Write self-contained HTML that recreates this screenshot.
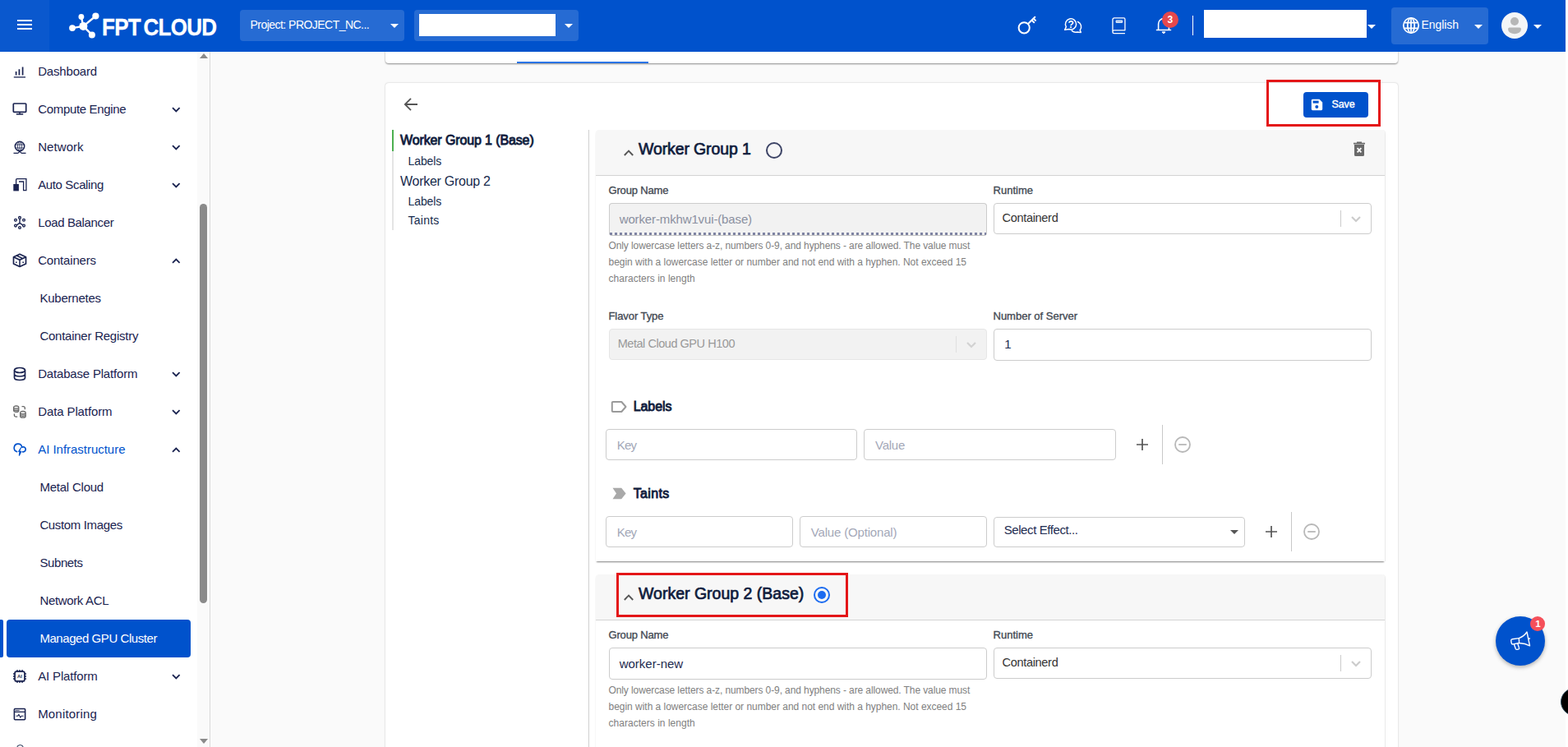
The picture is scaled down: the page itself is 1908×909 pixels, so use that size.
<!DOCTYPE html>
<html lang="en"><head><meta charset="utf-8"><title>FPT Cloud - Managed GPU Cluster</title>
<style>
*{box-sizing:border-box;margin:0;padding:0}
html,body{width:1908px;height:909px;overflow:hidden;background:#fff}
body{position:relative;font-family:'Liberation Sans', 'DejaVu Sans', sans-serif;}
.abs{position:absolute}
.t{position:absolute;white-space:nowrap;line-height:24px;font-family:'Liberation Sans', 'DejaVu Sans', sans-serif}
.r{font-family:'Liberation Sans', sans-serif}
#page{position:absolute;left:0;top:0;width:1905px;height:909px;background:#fafafa;overflow:hidden}
#hdr{position:absolute;left:0;top:0;width:1905px;height:63px;background:#0052cc}
#side{position:absolute;left:0;top:63px;width:256px;height:846px;background:#fff;border-right:1px solid #d9d9d9}
.hbox{position:absolute;background:rgba(255,255,255,.15);border-radius:4px}
.caret{position:absolute;width:0;height:0;border-left:5px solid transparent;border-right:5px solid transparent;border-top:5px solid #fff}
.card{position:absolute;background:#fff;border-radius:4px;box-shadow:0 1px 2px rgba(0,0,0,.45)}
.inp{position:absolute;border:1px solid #ccc;border-radius:4px;background:#fff}
.dis{background:#f2f2f2}
.phead{position:absolute;left:725px;width:960px;height:56px;background:#f7f7f7;border-bottom:1px solid #d4d4d4;border-radius:4px 4px 0 0}
.redbox{position:absolute;border:3.700px solid #e41618}
svg{position:absolute;overflow:visible}
</style></head>
<body>
<div id="page">
<div class="card" style="left:469px;top:40px;width:1232px;height:37px"></div>
<div class="abs" style="left:629px;top:75px;width:160px;height:2px;background:#2a74e6"></div>
<div class="card" style="left:469px;top:100.500px;width:1232px;height:900px;box-shadow:0 0 2px rgba(0,0,0,.25)"></div>
<svg style="left:491px;top:118px" width="18" height="18" viewBox="0 0 18 18" fill="none" stroke="#555" stroke-width="1.800"><path d="M17 9H2M9 1.800L1.800 9 9 16.200"/></svg>
<div class="redbox" style="left:1541.300px;top:96.600px;width:138.700px;height:57.400px"></div>
<div class="abs" style="left:1586px;top:112px;width:79px;height:31px;background:#0052cc;border-radius:4px"></div>
<svg style="left:1595px;top:120px" width="15" height="15" viewBox="0 0 15 15"><path d="M2.200.8h8.300l3.700 3.700v8.300a1.400 1.400 0 0 1-1.400 1.400H2.200a1.400 1.400 0 0 1-1.400-1.400V2.200A1.400 1.400 0 0 1 2.200.8z" fill="#fff"/><rect x="2.600" y="2.600" width="7" height="3" fill="#0052cc"/><circle cx="7.300" cy="10" r="2" fill="#0052cc"/></svg>
<div class="abs" style="left:477px;top:158px;width:2px;height:26px;background:#4caf50"></div>
<div class="abs" style="left:477px;top:184px;width:2px;height:96px;background:#e4e4e4"></div>
<div class="abs" style="left:716px;top:158px;width:1px;height:760px;background:#d0d0d0"></div>
<div class="abs" style="left:725px;top:158px;width:960px;height:525px;background:#fff;border-radius:4px 4px 0 0;box-shadow:0 2px 2px -1px rgba(0,0,0,.5), 1px 0 0 #f0f0f0"></div>
<div class="phead" style="top:158px"></div>
<svg style="left:759px;top:181.6px" width="12" height="8" viewBox="0 0 12 8" fill="none" stroke="#555" stroke-width="1.900"><path d="M.8 7l5.200-5.300L11.200 7"/></svg>
<div class="abs" style="left:932px;top:173px;width:20px;height:20px;border-radius:10px;border:2px solid #3d4466"></div>
<svg style="left:1646px;top:171px" width="16" height="20" viewBox="0 0 16 20"><path d="M2 5h12v12.500a1.500 1.500 0 0 1-1.500 1.500h-9A1.500 1.500 0 0 1 2 17.500z" fill="#6a6a6a"/><path d="M1 3.600h14M5 2.200h6" stroke="#6a6a6a" stroke-width="1.600" fill="none"/><path d="M5.600 9.200l4.800 5.200M10.400 9.200l-4.800 5.200" stroke="#fff" stroke-width="1.700"/></svg>
<div class="inp dis" style="left:741px;top:247px;width:460px;height:39px;border-bottom:none;box-shadow:0 1px 0 #c4c4c4"><div class="abs" style="left:0;right:0;bottom:0;height:3px;background:repeating-linear-gradient(90deg,#7f84a3 0,#7f84a3 3px,transparent 3px,transparent 6px)"></div></div>
<div class="inp" style="left:1209px;top:247px;width:460px;height:38px"></div>
<div class="abs" style="left:1631px;top:256px;width:1px;height:20px;background:#ccc"></div>
<svg style="left:1643.6px;top:263.0px" width="12" height="8" viewBox="0 0 12 8" fill="none" stroke="#ccc" stroke-width="2.200"><path d="M1 1l5 5 5-5"/></svg>
<div class="inp dis" style="left:741px;top:400px;width:460px;height:38px;border-color:#e6e6e6"></div>
<div class="abs" style="left:1163px;top:409px;width:1px;height:20px;background:#e0e0e0"></div>
<svg style="left:1175.5px;top:416.0px" width="12" height="8" viewBox="0 0 12 8" fill="none" stroke="#d2d2d2" stroke-width="2.200"><path d="M1 1l5 5 5-5"/></svg>
<div class="inp" style="left:1209px;top:400px;width:460px;height:39px"></div>
<svg style="left:744px;top:488px" width="19" height="14" viewBox="0 0 19 14" fill="none" stroke="#9a9a9a" stroke-width="2" stroke-linejoin="round"><path d="M1.800 1h10.500l5.200 6-5.200 6H1.800a1 1 0 0 1-1-1V2a1 1 0 0 1 1-1z"/></svg>
<div class="inp" style="left:737px;top:522px;width:306px;height:38px"></div>
<div class="inp" style="left:1051px;top:522px;width:307px;height:38px"></div>
<svg style="left:1383px;top:534px" width="14" height="14" viewBox="0 0 14 14" stroke="#555" stroke-width="1.700"><path d="M7 0v14M0 7h14"/></svg>
<div class="abs" style="left:1414px;top:517px;width:1px;height:48px;background:#c8c8c8"></div>
<svg style="left:1429px;top:531px" width="20" height="20" viewBox="0 0 20 20" fill="none" stroke="#b8b8b8" stroke-width="1.800"><circle cx="10" cy="10" r="9"/><path d="M5.200 10h9.600"/></svg>
<svg style="left:744px;top:593px" width="19" height="15" viewBox="0 0 19 15"><path d="M1.500.8h10.700l5.400 6.700-5.400 6.700H1.500L6 7.500z" fill="#a9a9a9"/></svg>
<div class="inp" style="left:737px;top:628px;width:228px;height:38px"></div>
<div class="inp" style="left:973px;top:628px;width:228px;height:38px"></div>
<div class="inp" style="left:1209px;top:629px;width:306px;height:37px"></div>
<div class="abs" style="left:1497px;top:645px;width:0;height:0;border-left:5px solid transparent;border-right:5px solid transparent;border-top:5px solid #555"></div>
<svg style="left:1540px;top:640px" width="14" height="14" viewBox="0 0 14 14" stroke="#555" stroke-width="1.700"><path d="M7 0v14M0 7h14"/></svg>
<div class="abs" style="left:1571px;top:623px;width:1px;height:48px;background:#c8c8c8"></div>
<svg style="left:1586px;top:637px" width="20" height="20" viewBox="0 0 20 20" fill="none" stroke="#b8b8b8" stroke-width="1.800"><circle cx="10" cy="10" r="9"/><path d="M5.200 10h9.600"/></svg>
<div class="abs" style="left:725px;top:699px;width:960px;height:525px;background:#fff;border-radius:4px 4px 0 0;box-shadow:0 2px 2px -1px rgba(0,0,0,.5), 1px 0 0 #f0f0f0"></div>
<div class="phead" style="top:699px"></div>
<svg style="left:759px;top:722.6px" width="12" height="8" viewBox="0 0 12 8" fill="none" stroke="#555" stroke-width="1.900"><path d="M.8 7l5.200-5.300L11.200 7"/></svg>
<div class="abs" style="left:990px;top:714px;width:20px;height:20px;border-radius:10px;border:2px solid #1d6cf0"></div>
<div class="abs" style="left:995px;top:719px;width:10px;height:10px;border-radius:5px;background:#1d6cf0"></div>
<div class="redbox" style="left:750.400px;top:697px;width:281.400px;height:53.800px"></div>
<div class="inp" style="left:741px;top:788px;width:460px;height:39px"></div>
<div class="inp" style="left:1209px;top:788px;width:460px;height:38px"></div>
<div class="abs" style="left:1631px;top:797px;width:1px;height:20px;background:#ccc"></div>
<svg style="left:1643.6px;top:804.0px" width="12" height="8" viewBox="0 0 12 8" fill="none" stroke="#ccc" stroke-width="2.200"><path d="M1 1l5 5 5-5"/></svg>
<div class="abs" style="left:1820px;top:750px;width:60px;height:60px;border-radius:30px;background:#0052cc;box-shadow:0 2px 5px rgba(0,0,0,.3)"></div>
<svg style="left:1837px;top:767px" width="26" height="26" viewBox="0 0 26 26" fill="none" stroke="#fff" stroke-width="1.400" stroke-linejoin="round" stroke-linecap="round"><path d="M11.300 9.600L3.200 10.700Q1.500 11 1.700 12.600L2.200 15.600Q2.500 17.100 4.100 16.900L11.600 15.500"/><path d="M11.300 9.600Q17.500 7.500 21 2L24.500 18.800Q19 15.800 11.600 15.500Z"/><path d="M5.400 17L7.300 22.400Q7.800 23.600 9.200 23.300L11 22.800Q11.900 22.400 11.500 21.400L9.800 16.200"/><path d="M23.200 10.200l1.200-.2"/></svg>
<div class="abs" style="left:1862px;top:750px;width:18px;height:18px;border-radius:9px;background:#f5505a"></div>
<div id="side">
<div class="abs" style="left:240px;top:0;width:15px;height:846px;background:#fafafa"></div>
<div class="abs" style="left:243px;top:185px;width:9px;height:486px;border-radius:5px;background:#8a8a8a"></div>
<div class="abs" style="left:242.500px;top:1.500px;width:0;height:0;border-left:5px solid transparent;border-right:5px solid transparent;border-bottom:6.500px solid #8a8a8a"></div>
<div class="abs" style="left:242.500px;top:836px;width:0;height:0;border-left:5px solid transparent;border-right:5px solid transparent;border-top:6.500px solid #8a8a8a"></div>
<div class="abs" style="left:19.500px;top:842.500px;width:9px;height:9px;border-radius:5px;border:1.500px solid #172b4d"></div>
<div class="abs" style="left:0;top:691px;width:4px;height:46px;background:#0052cc;border-radius:0 2px 2px 0"></div>
<div class="abs" style="left:8px;top:691px;width:224px;height:46px;background:#0052cc;border-radius:4px"></div>
</div>
<svg style="left:15px;top:78px" width="18" height="18" viewBox="0 0 18 18" fill="none" stroke="#1a2350" stroke-width="1.500"><path d="M1.800 15.900h14.200" stroke-width="1.300"/><path d="M4.600 13.500v-4.500M8.400 13.500v-7.300M12.600 13.500v-10" stroke-width="1.700"/></svg>
<svg style="left:208.5px;top:129.5px" width="10.600" height="7" viewBox="0 0 10.600 7" fill="none" stroke="#1a2350" stroke-width="1.800"><path d="M1 1.200l4.300 4.300 4.300-4.300"/></svg>
<svg style="left:15px;top:124px" width="18" height="18" viewBox="0 0 18 18" fill="none" stroke="#1a2350" stroke-width="1.500"><rect x="1.300" y="2" width="15.400" height="10.400" rx=".800" stroke-width="1.700"/><path d="M9 12.400v2.600M4.800 15h8.400" stroke-width="1.500"/></svg>
<svg style="left:208.5px;top:175.5px" width="10.600" height="7" viewBox="0 0 10.600 7" fill="none" stroke="#1a2350" stroke-width="1.800"><path d="M1 1.200l4.300 4.300 4.300-4.300"/></svg>
<svg style="left:15px;top:170px" width="18" height="18" viewBox="0 0 18 18" fill="none" stroke="#1a2350" stroke-width="1.500"><circle cx="9" cy="8" r="5.700" stroke-width="1.500"/><ellipse cx="9" cy="8" rx="2.600" ry="5.700" stroke-width=".800"/><path d="M3.300 6h11.400M3.300 10h11.400M9 2.300v11.400" stroke-width=".800"/><path d="M1.500 16.300h5c1.500 0 1.500-2 2.500-2s1 2 2.500 2h5" stroke-width="1.300"/></svg>
<svg style="left:208.5px;top:221.5px" width="10.600" height="7" viewBox="0 0 10.600 7" fill="none" stroke="#1a2350" stroke-width="1.800"><path d="M1 1.200l4.300 4.300 4.300-4.300"/></svg>
<svg style="left:15px;top:216px" width="18" height="18" viewBox="0 0 18 18" fill="none" stroke="#1a2350" stroke-width="1.500"><path d="M4.600 8.200V2.700a1 1 0 0 1 1-1H16.900V15.700H13.600V5H8" stroke-width="1.300"/><rect x="1.300" y="8" width="6.600" height="8.400" fill="#1a2350" stroke="none"/></svg>
<svg style="left:15px;top:262px" width="18" height="18" viewBox="0 0 18 18" fill="none" stroke="#1a2350" stroke-width="1.500"><g stroke-width="1.300"><path d="M9 4.300v5M9 9.300l-3.700 2.500M9 9.300l3.700 2.500" stroke-width="1.400"/><circle cx="9" cy="2.900" r="1.400"/><circle cx="4" cy="5.800" r="1.400"/><circle cx="14" cy="5.800" r="1.400"/><circle cx="4" cy="12.600" r="1.400"/><circle cx="14" cy="12.600" r="1.400"/><circle cx="9" cy="15" r="1.400"/></g></svg>
<svg style="left:208.5px;top:313.5px" width="10.600" height="7" viewBox="0 0 10.600 7" fill="none" stroke="#1a2350" stroke-width="1.800"><path d="M1 5.800l4.300-4.300 4.300 4.300"/></svg>
<svg style="left:15px;top:308px" width="18" height="18" viewBox="0 0 18 18" fill="none" stroke="#1a2350" stroke-width="1.500"><path d="M9 1.300l7.500 3.400v8.200L9 16.500l-7.500-3.600V4.700z" stroke-linejoin="round" stroke-width="1.700"/><path d="M1.500 4.700L9 8.300l7.500-3.600M9 8.300v8.200M5.200 3l7.600 3.600" stroke-width="1.500"/><path d="M4 11.200h1.600M12.400 11.200h1.600" stroke-width="1.400"/></svg>
<svg style="left:208.5px;top:451.5px" width="10.600" height="7" viewBox="0 0 10.600 7" fill="none" stroke="#1a2350" stroke-width="1.800"><path d="M1 1.200l4.300 4.300 4.300-4.300"/></svg>
<svg style="left:15px;top:446px" width="18" height="18" viewBox="0 0 18 18" fill="none" stroke="#1a2350" stroke-width="1.500"><ellipse cx="9" cy="4.500" rx="6.500" ry="3" stroke-width="1.700"/><path d="M2.500 4.500v9c0 1.700 2.900 3 6.500 3s6.500-1.300 6.500-3v-9M2.500 9c0 1.700 2.900 3 6.500 3s6.500-1.300 6.500-3" stroke-width="1.700"/></svg>
<svg style="left:208.5px;top:497.5px" width="10.600" height="7" viewBox="0 0 10.600 7" fill="none" stroke="#1a2350" stroke-width="1.800"><path d="M1 1.200l4.300 4.300 4.300-4.300"/></svg>
<svg style="left:15px;top:492px" width="18" height="18" viewBox="0 0 18 18" fill="none" stroke="#1a2350" stroke-width="1.500"><g stroke="#666" stroke-width="1.200"><rect x="1.600" y="1.800" width="6.200" height="7.600" rx="2.800" ry="2" fill="#ddd"/><path d="M1.600 4.600c1.500 1.200 4.700 1.200 6.200 0M1.600 6.800c1.500 1.200 4.700 1.200 6.200 0"/><rect x="9.600" y="8.400" width="6.600" height="7.800" rx="2.800" ry="2" fill="#ddd"/><path d="M9.600 11.200c1.500 1.200 5.100 1.200 6.600 0M9.600 13.400c1.500 1.200 5.100 1.200 6.600 0"/><path d="M11.500 2.600h1.800a2 2 0 0 1 2 2v1.700M6.200 15.200H4.400a2 2 0 0 1-2-2v-1.700" stroke-width="1.300"/></g></svg>
<svg style="left:208.5px;top:543.5px" width="10.600" height="7" viewBox="0 0 10.600 7" fill="none" stroke="#1a2350" stroke-width="1.800"><path d="M1 5.800l4.300-4.300 4.300 4.300"/></svg>
<svg style="left:15px;top:538px" width="18" height="18" viewBox="0 0 18 18" fill="none" stroke="#1a2350" stroke-width="1.500"><g stroke="#0052cc" stroke-width="1.700" stroke-linecap="round" stroke-linejoin="round"><path d="M5.600 11.600A4.800 4.800 0 1 1 11.730 6.180A3 3 0 1 1 13.200 11.800H12.600"/><path d="M10.600 6.800L7.800 11.400H10.800L8.400 16.200L9 11.600" stroke-width="1.200" fill="#0052cc"/></g></svg>
<svg style="left:208.5px;top:819.5px" width="10.600" height="7" viewBox="0 0 10.600 7" fill="none" stroke="#1a2350" stroke-width="1.800"><path d="M1 1.200l4.300 4.300 4.300-4.300"/></svg>
<svg style="left:15px;top:814px" width="18" height="18" viewBox="0 0 18 18" fill="none" stroke="#1a2350" stroke-width="1.500"><rect x="3.100" y="3.100" width="11.800" height="11.800" rx="2" stroke-width="1.700"/><path d="M6 1v2M9 1v2M12 1v2M6 15v2M9 15v2M12 15v2M1 6h2M1 9h2M1 12h2M15 6h2M15 9h2M15 12h2" stroke-width="1.400"/><text x="9" y="11.200" font-size="6" font-weight="700" text-anchor="middle" fill="#172b4d" stroke="none" font-family="Liberation Sans, sans-serif">AI</text></svg>
<svg style="left:15px;top:860px" width="18" height="18" viewBox="0 0 18 18" fill="none" stroke="#1a2350" stroke-width="1.500"><rect x="2.400" y="2.500" width="13.200" height="13.200" rx="1" stroke-width="1.600"/><path d="M2.400 6.300h13.200" stroke-width="1.300"/><path d="M4.500 11.200h2.200l1.200-1.600 2 3.400 1.300-1.800h2.400" stroke-width="1.100"/><path d="M4 4.500h4.500" stroke-width="1" stroke-dasharray="1.200 .5"/></svg>
<div id="hdr">
<div class="abs" style="left:0;top:0;width:60px;height:63px;background:rgba(255,255,255,.04)"></div>
<div class="abs" style="left:21px;top:24px;width:18px;height:2px;background:#fff"></div>
<div class="abs" style="left:21px;top:29px;width:18px;height:2px;background:#fff"></div>
<div class="abs" style="left:21px;top:34px;width:18px;height:2px;background:#fff"></div>
<svg style="left:82px;top:12px" width="42" height="38" viewBox="0 0 42 38">
<g stroke="#fff" stroke-width="2.400" stroke-linecap="round"><line x1="19.400" y1="19.900" x2="6" y2="22.100"/><line x1="19.400" y1="19.900" x2="16.900" y2="8.500"/><line x1="19.400" y1="19.900" x2="34.400" y2="7.500"/><line x1="19.400" y1="19.900" x2="29.900" y2="30.400"/></g>
<g fill="#fff"><circle cx="19.400" cy="19.900" r="5"/><circle cx="6" cy="22.100" r="3.900"/><circle cx="16.900" cy="8.500" r="3.400"/><circle cx="34.400" cy="7.500" r="4.100"/><circle cx="29.900" cy="30.400" r="4"/></g></svg>
<div class="hbox" style="left:292px;top:12px;width:200px;height:38px"></div>
<div class="caret" style="left:475px;top:29px"></div>
<div class="hbox" style="left:504px;top:12px;width:200px;height:38px"></div>
<div class="abs" style="left:510px;top:16.5px;width:165.5px;height:27.5px;background:#fff"></div>
<div class="caret" style="left:687px;top:29px"></div>
<svg style="left:1236px;top:18px" width="28" height="26" viewBox="0 0 28 26" fill="none" stroke="#fff" stroke-width="2" stroke-linecap="round">
<circle cx="10.2" cy="15.8" r="6.6"/><path d="M15 11 L23.3 2.8 M19.5 6.6 L22.2 9.3 M21.6 4.5 L24 6.9"/></svg>
<svg style="left:1294px;top:20px" width="24" height="22" viewBox="0 0 24 22" fill="none" stroke="#fff" stroke-width="1.500" stroke-linejoin="round" stroke-linecap="round">
<path d="M1.700 16.300L3.330 12.670A6.600 6.600 0 1 1 6.790 15.570Z"/>
<path d="M17.470 6.480A6.600 6.600 0 0 1 20.200 16.700L21.300 19.400L16.700 18.970A6.600 6.600 0 0 1 10.300 17.400"/>
<text x="9.100" y="13.800" font-size="12" font-weight="700" text-anchor="middle" fill="#fff" stroke="none" font-family="Liberation Sans, sans-serif">?</text></svg>
<svg style="left:1353.300px;top:20.600px" width="16.800" height="20.500" viewBox="0 0 18 22" fill="none" stroke="#fff" stroke-width="1.4" stroke-linejoin="round">
<path d="M3 1h12.500a1.600 1.600 0 0 1 1.600 1.600V17H3a2 2 0 0 0 0 4h14.100M1 19V3a2 2 0 0 1 2-2"/><rect x="5.500" y="4.300" width="8" height="2.600" fill="#9dbcf0" stroke="#fff" stroke-width="1"/></svg>
<svg style="left:1406px;top:20px" width="20" height="22" viewBox="0 0 20 22" fill="none" stroke="#fff" stroke-width="1.600" stroke-linejoin="round" stroke-linecap="round">
<path d="M1.500 16.500h17M3.600 16.500V9a6.400 6.400 0 0 1 12.800 0v7.500"/><path d="M8.300 19.200a1.800 1.800 0 0 0 3.400 0z" fill="#fff" stroke-width="1"/></svg>
<div class="abs" style="left:1414px;top:14px;width:20px;height:20px;border-radius:10px;background:#e5484d"></div>
<div class="abs" style="left:1450.5px;top:19px;width:1.5px;height:24px;background:#fff"></div>
<div class="abs" style="left:1465px;top:11.5px;width:198px;height:34.500px;background:#fff"></div>
<div class="caret" style="left:1664px;top:29.500px"></div>
<div class="hbox" style="left:1693px;top:9px;width:118px;height:45px"></div>
<svg style="left:1706px;top:20px" width="22" height="22" viewBox="0 0 22 22" fill="none" stroke="#fff" stroke-width="1.700">
<circle cx="11" cy="11" r="9.200"/><ellipse cx="11" cy="11" rx="4.200" ry="9.200"/><path d="M11 1.800v18.400M2.500 7.600h17M2.500 14.400h17"/></svg>
<div class="caret" style="left:1794px;top:29.500px"></div>
<svg style="left:1827px;top:15px" width="32" height="32" viewBox="0 0 32 32"><circle cx="16" cy="16" r="16" fill="#f4f5f7"/><circle cx="16" cy="11" r="5" fill="#b7b7b7"/><path d="M8 20.500a2 2 0 0 1 2-2h12a2 2 0 0 1 2 2a8 5.700 0 0 1-16 0z" fill="#b7b7b7"/></svg>
<div class="caret" style="left:1866px;top:29.500px"></div>
</div>
<span id="logo" class="t" style="left:124px;top:20.9px;font-size:29.8px;font-weight:700;color:#fff;letter-spacing:-0.800px;font-family:'Liberation Sans', sans-serif;transform:scaleX(.872);transform-origin:0 50%;word-spacing:-3.500px;-webkit-text-stroke:.350px #fff;">FPT CLOUD</span>
<span id="proj" class="t" style="left:304.5px;top:18.0px;font-size:14px;font-weight:400;color:#fff;letter-spacing:-0.531px;">Project: PROJECT_NC...</span>
<span id="b3" class="t" style="left:1420.6px;top:11.6px;font-size:12px;font-weight:700;color:#fff;letter-spacing:0.119px;">3</span>
<span id="eng" class="t" style="left:1729.5px;top:17.5px;font-size:14px;font-weight:400;color:#fff;letter-spacing:-0.060px;">English</span>
<span id="sb0" class="t" style="left:46.2px;top:74.5px;font-size:15px;font-weight:400;color:#1a2350;letter-spacing:-0.177px;">Dashboard</span>
<span id="sb1" class="t" style="left:46.2px;top:120.5px;font-size:15px;font-weight:400;color:#1a2350;letter-spacing:-0.325px;">Compute Engine</span>
<span id="sb2" class="t" style="left:46.2px;top:166.5px;font-size:15px;font-weight:400;color:#1a2350;letter-spacing:0.069px;">Network</span>
<span id="sb3" class="t" style="left:46.2px;top:212.5px;font-size:15px;font-weight:400;color:#1a2350;letter-spacing:-0.369px;">Auto Scaling</span>
<span id="sb4" class="t" style="left:46.2px;top:258.5px;font-size:15px;font-weight:400;color:#1a2350;letter-spacing:-0.358px;">Load Balancer</span>
<span id="sb5" class="t" style="left:46.2px;top:304.5px;font-size:15px;font-weight:400;color:#1a2350;letter-spacing:-0.195px;">Containers</span>
<span id="sb6" class="t" style="left:48.4px;top:350.5px;font-size:15px;font-weight:400;color:#1a2350;letter-spacing:-0.223px;">Kubernetes</span>
<span id="sb7" class="t" style="left:48.4px;top:396.5px;font-size:15px;font-weight:400;color:#1a2350;letter-spacing:-0.246px;">Container Registry</span>
<span id="sb8" class="t" style="left:46.2px;top:442.5px;font-size:15px;font-weight:400;color:#1a2350;letter-spacing:-0.185px;">Database Platform</span>
<span id="sb9" class="t" style="left:46.2px;top:488.5px;font-size:15px;font-weight:400;color:#1a2350;letter-spacing:-0.108px;">Data Platform</span>
<span id="sb10" class="t" style="left:46.2px;top:534.5px;font-size:15px;font-weight:400;color:#0052cc;letter-spacing:-0.025px;">AI Infrastructure</span>
<span id="sb11" class="t" style="left:48.4px;top:580.5px;font-size:15px;font-weight:400;color:#1a2350;letter-spacing:-0.222px;">Metal Cloud</span>
<span id="sb12" class="t" style="left:48.4px;top:626.5px;font-size:15px;font-weight:400;color:#1a2350;letter-spacing:-0.357px;">Custom Images</span>
<span id="sb13" class="t" style="left:48.4px;top:672.5px;font-size:15px;font-weight:400;color:#1a2350;letter-spacing:-0.394px;">Subnets</span>
<span id="sb14" class="t" style="left:48.4px;top:718.5px;font-size:15px;font-weight:400;color:#1a2350;letter-spacing:-0.340px;">Network ACL</span>
<span id="sb15" class="t" style="left:48.4px;top:764.5px;font-size:15px;font-weight:400;color:#fff;letter-spacing:-0.437px;">Managed GPU Cluster</span>
<span id="sb16" class="t" style="left:46.2px;top:810.5px;font-size:15px;font-weight:400;color:#1a2350;letter-spacing:-0.163px;">AI Platform</span>
<span id="sb17" class="t" style="left:46.2px;top:856.5px;font-size:15px;font-weight:400;color:#1a2350;letter-spacing:0.175px;">Monitoring</span>
<span id="save" class="t" style="left:1620.5px;top:115.1px;font-size:12.5px;font-weight:400;color:#fff;letter-spacing:-0.125px;font-family:'Liberation Sans', sans-serif;-webkit-text-stroke:.400px #fff;">Save</span>
<span id="toc1" class="t" style="left:487px;top:159.3px;font-size:16px;font-weight:400;color:#101c3d;letter-spacing:-0.119px;font-family:'Liberation Sans', sans-serif;-webkit-text-stroke:.850px #101c3d;">Worker Group 1 (Base)</span>
<span id="toc2" class="t" style="left:496.6px;top:183.8px;font-size:14px;font-weight:400;color:#172b4d;letter-spacing:-0.111px;font-family:'Liberation Sans', sans-serif;">Labels</span>
<span id="toc3" class="t" style="left:487px;top:209.3px;font-size:16px;font-weight:400;color:#172b4d;letter-spacing:-0.274px;font-family:'Liberation Sans', sans-serif;">Worker Group 2</span>
<span id="toc4" class="t" style="left:496.6px;top:232.8px;font-size:14px;font-weight:400;color:#172b4d;letter-spacing:-0.111px;font-family:'Liberation Sans', sans-serif;">Labels</span>
<span id="toc5" class="t" style="left:496.6px;top:255.8px;font-size:14px;font-weight:400;color:#172b4d;letter-spacing:0.220px;font-family:'Liberation Sans', sans-serif;">Taints</span>
<span id="wg1" class="t" style="left:777px;top:169.2px;font-size:19.5px;font-weight:400;color:#101c3d;letter-spacing:-0.119px;font-family:'Liberation Sans', sans-serif;-webkit-text-stroke:.700px #101c3d;">Worker Group 1</span>
<span id="gn1" class="t" style="left:740.5px;top:219.7px;font-size:13px;font-weight:400;color:#444a54;letter-spacing:-0.163px;font-family:'Liberation Sans', sans-serif;-webkit-text-stroke:.350px #444a54;">Group Name</span>
<span id="rt1" class="t" style="left:1208.5px;top:219.7px;font-size:13px;font-weight:400;color:#444a54;letter-spacing:0.013px;font-family:'Liberation Sans', sans-serif;-webkit-text-stroke:.350px #444a54;">Runtime</span>
<span id="gnv1" class="t" style="left:753.7px;top:254.6px;font-size:15px;font-weight:400;color:#8b90a0;letter-spacing:-0.132px;">worker-mkhw1vui-(base)</span>
<span id="ctd1" class="t" style="left:1219.6px;top:253.0px;font-size:14.5px;font-weight:400;color:#333;letter-spacing:-0.314px;font-family:'Liberation Sans', sans-serif;">Containerd</span>
<span id="hl1_0" class="t" style="left:740.5px;top:287.0px;font-size:12px;font-weight:400;color:#808080;letter-spacing:-0.101px;font-family:'Liberation Sans', sans-serif;">Only lowercase letters a-z, numbers 0-9, and hyphens - are allowed. The value must</span>
<span id="hl1_1" class="t" style="left:740.5px;top:307.0px;font-size:12px;font-weight:400;color:#808080;letter-spacing:-0.026px;font-family:'Liberation Sans', sans-serif;">begin with a lowercase letter or number and not end with a hyphen. Not exceed 15</span>
<span id="hl1_2" class="t" style="left:740.5px;top:327.0px;font-size:12px;font-weight:400;color:#808080;letter-spacing:0.028px;font-family:'Liberation Sans', sans-serif;">characters in length</span>
<span id="ft" class="t" style="left:740.5px;top:372.7px;font-size:13px;font-weight:400;color:#444a54;letter-spacing:-0.071px;font-family:'Liberation Sans', sans-serif;-webkit-text-stroke:.350px #444a54;">Flavor Type</span>
<span id="nos" class="t" style="left:1208.5px;top:372.7px;font-size:13px;font-weight:400;color:#444a54;letter-spacing:-0.006px;font-family:'Liberation Sans', sans-serif;-webkit-text-stroke:.350px #444a54;">Number of Server</span>
<span id="mc" class="t" style="left:751.7px;top:406.0px;font-size:14.5px;font-weight:400;color:#999;letter-spacing:-0.461px;font-family:'Liberation Sans', sans-serif;">Metal Cloud GPU H100</span>
<span id="one" class="t" style="left:1222.2px;top:407.3px;font-size:15px;font-weight:400;color:#1d2b50;letter-spacing:-2.344px;">1</span>
<span id="lab" class="t" style="left:770.7px;top:483.3px;font-size:16px;font-weight:400;color:#101c3d;letter-spacing:-0.060px;font-family:'Liberation Sans', sans-serif;-webkit-text-stroke:.850px #101c3d;">Labels</span>
<span id="key1" class="t" style="left:750.8px;top:529.7px;font-size:15px;font-weight:400;color:#a4a8b8;letter-spacing:-0.883px;">Key</span>
<span id="val1" class="t" style="left:1065px;top:529.7px;font-size:15px;font-weight:400;color:#a4a8b8;letter-spacing:-0.253px;">Value</span>
<span id="tnt" class="t" style="left:770.7px;top:589.2px;font-size:16px;font-weight:400;color:#101c3d;letter-spacing:0.334px;font-family:'Liberation Sans', sans-serif;-webkit-text-stroke:.850px #101c3d;">Taints</span>
<span id="key2" class="t" style="left:750.8px;top:635.7px;font-size:15px;font-weight:400;color:#a4a8b8;letter-spacing:-0.883px;">Key</span>
<span id="val2" class="t" style="left:986.8px;top:635.7px;font-size:15px;font-weight:400;color:#a4a8b8;letter-spacing:-0.174px;">Value (Optional)</span>
<span id="sele" class="t" style="left:1221.7px;top:633.0px;font-size:15px;font-weight:400;color:#1d2b50;letter-spacing:-0.416px;">Select Effect...</span>
<span id="wg2" class="t" style="left:777px;top:710.2px;font-size:19.5px;font-weight:400;color:#101c3d;letter-spacing:0.004px;font-family:'Liberation Sans', sans-serif;-webkit-text-stroke:.700px #101c3d;">Worker Group 2 (Base)</span>
<span id="gn2" class="t" style="left:740.5px;top:760.7px;font-size:13px;font-weight:400;color:#444a54;letter-spacing:-0.163px;font-family:'Liberation Sans', sans-serif;-webkit-text-stroke:.350px #444a54;">Group Name</span>
<span id="rt2" class="t" style="left:1208.5px;top:760.7px;font-size:13px;font-weight:400;color:#444a54;letter-spacing:0.013px;font-family:'Liberation Sans', sans-serif;-webkit-text-stroke:.350px #444a54;">Runtime</span>
<span id="gnv2" class="t" style="left:753.7px;top:795.6px;font-size:15px;font-weight:400;color:#1d2b50;letter-spacing:-0.003px;">worker-new</span>
<span id="ctd2" class="t" style="left:1219.6px;top:794.0px;font-size:14.5px;font-weight:400;color:#333;letter-spacing:-0.314px;font-family:'Liberation Sans', sans-serif;">Containerd</span>
<span id="hl2_0" class="t" style="left:740.5px;top:828.0px;font-size:12px;font-weight:400;color:#808080;letter-spacing:-0.101px;font-family:'Liberation Sans', sans-serif;">Only lowercase letters a-z, numbers 0-9, and hyphens - are allowed. The value must</span>
<span id="hl2_1" class="t" style="left:740.5px;top:848.0px;font-size:12px;font-weight:400;color:#808080;letter-spacing:-0.026px;font-family:'Liberation Sans', sans-serif;">begin with a lowercase letter or number and not end with a hyphen. Not exceed 15</span>
<span id="hl2_2" class="t" style="left:740.5px;top:868.0px;font-size:12px;font-weight:400;color:#808080;letter-spacing:0.028px;font-family:'Liberation Sans', sans-serif;">characters in length</span>
<span id="fab1" class="t" style="left:1868.2px;top:747.2px;font-size:11.5px;font-weight:700;color:#fff;letter-spacing:-0.809px;">1</span>
</div>
<div class="abs" style="left:1899px;top:837px;width:34px;height:34px;border-radius:17px;background:#000;border:1px solid #2a4a5c"></div>
</body></html>
